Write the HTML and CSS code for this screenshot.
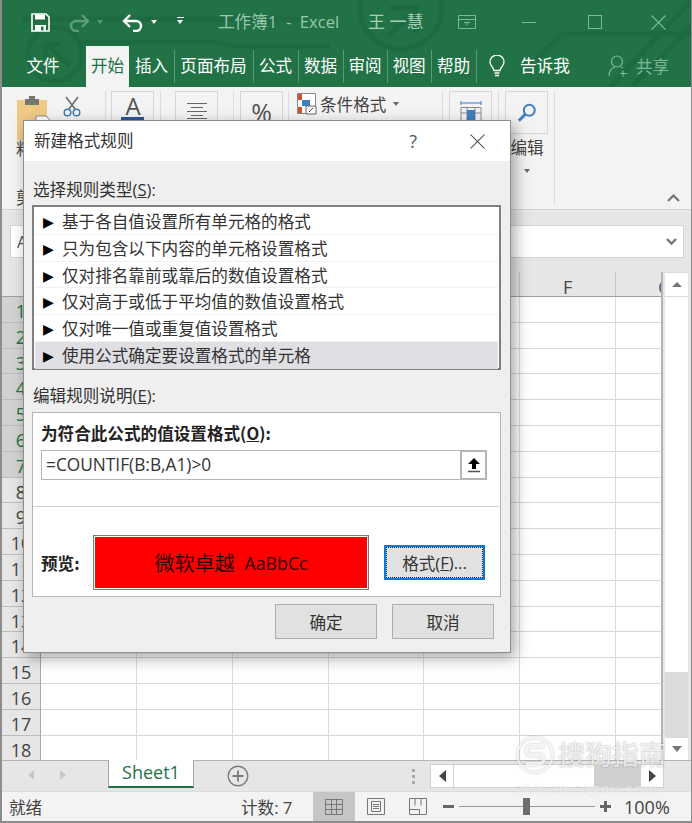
FILE: index.html
```html
<!DOCTYPE html>
<html lang="zh">
<head>
<meta charset="utf-8">
<title>新建格式规则</title>
<link rel="stylesheet" href="styles.css">
</head>
<body>
<div class="app">
  <header class="head">
    <svg class="circuit" width="692" height="87" viewBox="0 0 692 87" fill="none" stroke="#1e6b41" stroke-width="5">
      <path d="M22 19H300"/>
      <circle cx="55" cy="54" r="27"/>
      <path d="M46 44l24 22M46 44h14M46 44v14"/>
      <path d="M80 42H220l8 4H330"/>
      <circle cx="401" cy="8" r="41"/>
      <path d="M390 8h26v26M416 8l-28 28"/>
      <path d="M536 60l26-26H692M610 87L692 0M632 87L692 25"/>
    </svg>
    <div class="titlebar">
      <svg class="ic-save" width="19" height="19" viewBox="0 0 19 19"><path d="M1 1h14l3 3v14H1z" fill="none" stroke="#fff" stroke-width="1.6"/><path d="M4 1.5h10v5H4z" fill="#fff"/><path d="M4 12h11v6H4z" fill="#fff"/><path d="M10 13.500h2.500v4H10z" fill="#217346"/></svg>
      <svg class="ic-redo" width="22" height="20" viewBox="0 0 22 20" fill="none" stroke="#5c9c7a" stroke-width="2.400"><path d="M20 9H8a5 5 0 0 0 0 10h3"/><path d="M14 3l6 6-6 6"/></svg>
      <span class="drop dim"></span>
      <svg class="ic-undo" width="22" height="20" viewBox="0 0 22 20" fill="none" stroke="#fff" stroke-width="2.400"><path d="M2 9h12a5 5 0 0 1 0 10h-3"/><path d="M8 3L2 9l6 6"/></svg>
      <span class="drop"></span>
      <span class="custom"></span>
      <span class="doc">工作簿1&nbsp;&nbsp;-&nbsp;&nbsp;Excel</span>
      <span class="user">王 一慧</span>
      <svg class="ic-disp" width="18" height="14" viewBox="0 0 18 14" fill="none" stroke="#7fb79a"><path d="M.5.500h17v13H.500zM.5 4.500h17M6 7.500h6M9 7.500v3"/></svg>
      <span class="win-min"></span>
      <span class="win-max"></span>
      <svg class="win-close" width="15" height="15" viewBox="0 0 15 15" stroke="#7fb79a" stroke-width="1.100"><path d="M.5.500l14 14M14.500.500l-14 14"/></svg>
    </div>
    <nav class="tabs">
      <span class="tab t-file">文件</span>
      <span class="tab t-home">开始</span>
      <span class="tab t-ins sep">插入</span>
      <span class="tab t-page sep">页面布局</span>
      <span class="tab t-form sep">公式</span>
      <span class="tab t-data sep">数据</span>
      <span class="tab t-rev sep">审阅</span>
      <span class="tab t-view sep">视图</span>
      <span class="tab t-help sep">帮助</span>
      <svg class="ic-bulb" width="16" height="23" viewBox="0 0 16 23" fill="none" stroke="#fff" stroke-width="1.300"><path d="M5 15.500C4.500 12 1 11 1 7a7 7 0 0 1 14 0c0 4-3.500 5-4 8.500z"/><path d="M5.500 18h5M6 20.500h4" stroke-width="1.600"/></svg>
      <span class="tell">告诉我</span>
      <span class="share">
        <svg width="20" height="22" viewBox="0 0 20 22" fill="none" stroke="#7fb79a" stroke-width="1.200"><circle cx="9" cy="6.500" r="5.500"/><path d="M1 21c0-5 3-8 6-9M13 12l2 1M15 15.500v6M12 18.500h7"/></svg>
        <span>共享</span>
      </span>
    </nav>
  </header>

  <section class="ribbon">
    <div class="rb-paste">
      <svg width="38" height="44" viewBox="0 0 38 44"><path d="M1 4h30v40H1z" fill="#f0c987"/><path d="M9 3h14v6H9zM13 0h6v4h-6z" fill="#767676"/><path d="M20 20h10l6 6v18H20z" fill="#fff" stroke="#8a8a8a"/></svg>
      <svg class="scissors" width="18" height="21" viewBox="0 0 18 21" fill="none"><path d="M3 1l9 12M15 1L6 13" stroke="#6d6d6d" stroke-width="1.600"/><circle cx="4.500" cy="16.500" r="3.300" stroke="#3d7ab5" stroke-width="1.500"/><circle cx="13.500" cy="16.500" r="3.300" stroke="#3d7ab5" stroke-width="1.500"/></svg>
    </div>
    <span class="rb-lbl paste-lbl">粘贴</span>
    <span class="rb-lbl clip-lbl">剪贴板</span>
    <i class="rb-sep s1"></i>
    <div class="rb-btn b1"><svg width="24" height="24" viewBox="0 0 24 24"><text class="ic-a" x="12" y="19" text-anchor="middle">A</text><rect x="0" y="21" width="23" height="3" fill="#2b579a"/></svg></div>
    <i class="rb-sep s2"></i>
    <div class="rb-btn b2"><svg width="20" height="16" viewBox="0 0 20 16" stroke="#666"><path d="M0 .500h20M4 4.500h12M0 8.500h20M4 12.500h12M0 15.500h20"/></svg></div>
    <i class="rb-sep s3"></i>
    <div class="rb-btn b3"><span class="pct">%</span></div>
    <i class="rb-sep s4"></i>
    <div class="cond">
      <svg width="20" height="22" viewBox="0 0 20 22"><path d="M.5.500h18v20H.500z" fill="#fff" stroke="#888"/><path d="M1 1h4v6H1zM1 14h4v6H1z" fill="#d2502d"/><path d="M5 7h8v6H5z" fill="#3f7fc0"/><path d="M9 13h10v8H9z" fill="#fff" stroke="#666"/><path d="M12 19l4-4" stroke="#444"/></svg>
      <span>条件格式</span><span class="drop grey"></span>
    </div>
    <i class="rb-sep s5"></i>
    <div class="rb-btn b5"><svg width="22" height="28" viewBox="0 0 22 28" fill="none"><path d="M1 3h20M1 1v4M21 1v4" stroke="#3f7fc0"/><path d="M1 7.500h20v19H1zM1 13h20M7 7.500v19M15 7.500v19" stroke="#888"/><path d="M7 10h8v10H7z" fill="#3f7fc0"/></svg></div>
    <i class="rb-sep s6"></i>
    <div class="rb-btn b6"><svg width="20" height="20" viewBox="0 0 22 22" fill="none" stroke="#3f7fc0"><circle cx="13.500" cy="8" r="6" stroke-width="2.200"/><path d="M9 12.500l-7 7" stroke-width="3.200"/></svg></div>
    <div class="edit-lbl">编辑<span class="drop grey"></span></div>
    <i class="rb-sep s7"></i>
    <svg class="collapse" width="13" height="8" viewBox="0 0 13 8" fill="none" stroke="#777" stroke-width="2.200"><path d="M1 7l5.500-5.500L12 7"/></svg>
  </section>

  <section class="fbar">
    <div class="fbox"><span>A</span><svg width="11" height="8" viewBox="0 0 11 8" fill="none" stroke="#777" stroke-width="2.400"><path d="M1 1l4.500 4.500L10 1"/></svg></div>
  </section>

  <section class="sheet">
    <div class="heads">
      <div class="corner"></div>
      <div class="rows">
        <b class="on">1</b><b class="on">2</b><b class="on">3</b><b class="on">4</b><b class="on">5</b><b class="on">6</b><b class="on">7</b><b>8</b><b>9</b><b>10</b><b>11</b><b>12</b><b>13</b><b>14</b><b>15</b><b>16</b><b>17</b><b>18</b>
      </div>
    </div>
    <div class="data">
      <div class="cols">
        <span></span><span></span><span></span><span></span><span></span><span>F</span><span class="cut">G</span>
      </div>
      <div class="cells"></div>
    </div>
    <div class="vscroll">
      <span class="arrow"><i class="tri up"></i></span>
      <span class="thumb"></span>
      <span class="track"></span>
      <span class="arrow"><i class="tri down"></i></span>
    </div>
  </section>

  <section class="strip">
    <i class="nav-l"></i><i class="nav-r"></i>
    <span class="sheet-tab">Sheet1</span>
    <svg class="add" width="22" height="22" viewBox="0 0 22 22" fill="none" stroke="#7a7a7a"><circle cx="11" cy="11" r="9.800" stroke-width="1.400"/><path d="M11 5.500v11M5.500 11h11" stroke-width="1.800"/></svg>
    <span class="dots"></span>
    <div class="hscroll">
      <span class="harrow"><i class="tri left"></i></span>
      <span class="hthumb"></span>
      <span class="htrack"></span>
      <span class="harrow"><i class="tri right"></i></span>
    </div>
  </section>

  <footer class="status">
    <span class="ready">就绪</span>
    <span class="count">计数: 7</span>
    <span class="view on"><svg width="18" height="16" viewBox="0 0 18 16" fill="none" stroke="#777"><path d="M.5.500h17v15H.500zM.5 5.500h17M.5 10.500h17M6.500.500v15M11.500.500v15"/></svg></span>
    <span class="view"><svg width="18" height="17" viewBox="0 0 18 17" fill="none" stroke="#777"><path d="M.5.500h17v16H.500z"/><path d="M4.500 3.500h9v10h-9zM6 6.500h6M6 8.500h6M6 10.500h6"/></svg></span>
    <span class="view"><svg width="18" height="17" viewBox="0 0 18 17" fill="none" stroke="#777"><path d="M.5.500h17v16H.500zM.5 11.500h10v5M6 .500v7M12 .500v7"/></svg></span>
    <span class="zoom">
      <i class="z-minus"></i>
      <span class="slider"><i class="knob"></i></span>
      <i class="z-plus"></i>
    </span>
    <span class="pctz">100%</span>
  </footer>

  <div class="wm">
    <svg width="38" height="38" viewBox="0 0 38 38" fill="none" stroke="#fff" stroke-opacity=".75"><circle cx="19" cy="19" r="17.500" stroke-width="2"/><path d="M28 10H15a4.500 4.500 0 0 0 0 9h8a4.500 4.500 0 0 1 0 9H10" stroke-width="4"/></svg>
    <span class="wm-t">搜狗指南</span>
    <span class="wm-u">zhinan.sogou.com</span>
  </div>

  <div class="dialog">
    <div class="dlg-title">
      <span class="dlg-name">新建格式规则</span>
      <span class="help">?</span>
      <svg width="15" height="15" viewBox="0 0 15 15" stroke="#333" stroke-width="1.050"><path d="M.5.500l14 14M14.500.500l-14 14"/></svg>
    </div>
    <div class="dlg-body">
      <label class="lbl">选择规则类型(<u>S</u>):</label>
      <ul class="rules">
        <li><i>▶</i>基于各自值设置所有单元格的格式</li>
        <li><i>▶</i>只为包含以下内容的单元格设置格式</li>
        <li><i>▶</i>仅对排名靠前或靠后的数值设置格式</li>
        <li><i>▶</i>仅对高于或低于平均值的数值设置格式</li>
        <li><i>▶</i>仅对唯一值或重复值设置格式</li>
        <li class="sel"><i>▶</i>使用公式确定要设置格式的单元格</li>
      </ul>
      <label class="lbl lbl2">编辑规则说明(<u>E</u>):</label>
      <div class="group">
        <div class="g-top">
          <div class="g-head">为符合此公式的值设置格式(<u>O</u>):</div>
          <div class="formula">
            <span class="f-text">=COUNTIF(B:B,A1)&gt;0</span>
            <span class="f-btn"><svg width="12" height="15" viewBox="0 0 12 15"><path d="M6 0l6 6H8v5H4V6H0z" fill="#000"/><path d="M0 13.500h12" stroke="#555" stroke-width="1.500"/></svg></span>
          </div>
        </div>
        <div class="g-bot">
          <span class="pv-lbl">预览:</span>
          <div class="pv"><div class="pv-in"><span class="pv-c">微软卓越</span><span class="pv-l">AaBbCc</span></div></div>
          <button class="btn fmt"><span>格式(<u>F</u>)...</span></button>
        </div>
      </div>
      <div class="actions">
        <button class="btn act">确定</button>
        <button class="btn act">取消</button>
      </div>
    </div>
  </div>
</div>
</body>
</html>
```
FILE: styles.css
```css
* { box-sizing: border-box; }
html, body { margin: 0; padding: 0; }
body { background: #fff; font-family: "Open Sans", "Noto Sans CJK SC", sans-serif; color: #333; }
.app { position: relative; width: 692px; height: 823px; overflow: hidden; display: flex; flex-direction: column; background: #f3f3f3; border-left: 2px solid #8d8d8d; border-right: 1px solid #8d8d8d; border-bottom: 2px solid #8d8d8d; }

.head { position: relative; height: 87px; margin-left: -2px; margin-right: -1px; background: #217346; flex: none; }
.circuit { position: absolute; left: 0; top: 0; }
.titlebar { position: relative; height: 44px; display: flex; align-items: center; padding-left: 31px; }
.ic-save { flex: none; }
.ic-redo { margin-left: 18px; }
.drop { width: 0; height: 0; border: 3.5px solid transparent; border-top: 4px solid #fff; border-bottom: 0; display: inline-block; }
.drop.dim { border-top-color: #5c9c7a; margin-left: 7px; }
.drop.grey { border-top-color: #666; }
.ic-undo { margin-left: 19px; }
.ic-undo + .drop { margin-left: 7px; }
.custom { width: 7px; height: 6px; margin-left: 20px; margin-bottom: 4px; border-top: 1px solid #fff; position: relative; }
.custom::after { content: ""; position: absolute; left: 0; top: 2px; border: 3.5px solid transparent; border-top: 4px solid #fff; border-bottom: 0; }
.doc { margin-left: 34px; font-size: 16.600px; color: #9cc7b0; white-space: nowrap; width: 150px; line-height: 42px; }
.user { font-size: 17px; color: #a9cfba; width: 54px; white-space: nowrap; line-height: 42px; }
.ic-disp { margin-left: 36px; }
.win-min { width: 14px; height: 1px; background: #7fb79a; margin-left: 46px; }
.win-max { width: 14px; height: 14px; border: 1px solid #7fb79a; margin-left: 52px; }
.win-close { margin-left: 49px; }

.tabs { position: relative; height: 43px; font-size: 16.600px; color: #fff; }
.tab { position: absolute; top: 2px; height: 41px; line-height: 40px; text-align: center; white-space: nowrap; }
.tab.sep::after { content: ""; position: absolute; top: 4px; right: -1px; width: 1px; height: 33px; background: #5a9a78; }
.t-file { left: 21px; width: 44px; }
.t-home { left: 86px; width: 43px; background: #f3f3f3; color: #217346; }
.t-ins { left: 129px; width: 45px; }
.t-page { left: 174px; width: 79px; }
.t-form { left: 253px; width: 45px; }
.t-data { left: 298px; width: 45px; }
.t-rev { left: 343px; width: 44px; }
.t-view { left: 387px; width: 44px; }
.t-help { left: 431px; width: 45px; }
.ic-bulb { position: absolute; left: 489px; top: 11px; }
.tell { position: absolute; left: 520px; top: 2px; line-height: 40px; }
.share { position: absolute; left: 608px; top: 2px; height: 40px; display: flex; align-items: center; gap: 8px; color: #7fb79a; }

.ribbon { position: relative; height: 123px; flex: none; background: #f3f3f3; border-bottom: 1px solid #d2d2d2; margin-left: -2px; }
.rb-paste { position: absolute; left: 16px; top: 9px; }
.scissors { position: absolute; left: 47px; top: 0; }
.rb-lbl { position: absolute; left: 16px; font-size: 16.600px; color: #444; white-space: nowrap; line-height: 22px; }
.paste-lbl { top: 51px; }
.clip-lbl { top: 100px; }
.rb-sep { position: absolute; top: 4px; width: 1px; height: 114px; background: #dcdcdc; }
.s1 { left: 105px; } .s2 { left: 160px; } .s3 { left: 233px; } .s4 { left: 288px; } .s5 { left: 442px; } .s6 { left: 498px; } .s7 { left: 554px; }
.rb-btn { position: absolute; top: 4px; width: 43px; height: 43px; border: 1px solid #d6d6d6; display: flex; align-items: flex-start; justify-content: center; }
.b1 { left: 111px; padding-top: 4px; } .b2 { left: 175px; padding-top: 11px; } .b3 { left: 240px; padding-top: 2px; } .b5 { left: 449px; padding-top: 8px; } .b6 { left: 505px; padding-top: 11px; }
.ic-a { font: 24px "Open Sans", sans-serif; fill: #555; }
.pct { font-size: 25px; color: #555; line-height: 36px; }
.cond { position: absolute; left: 297px; top: 5px; display: flex; align-items: center; gap: 3px; font-size: 16.600px; color: #444; }
.cond .drop { margin-left: 4px; }
.edit-lbl { position: absolute; left: 509px; top: 46px; width: 36px; font-size: 16.600px; line-height: 30px; color: #444; display: flex; flex-direction: column; align-items: center; }
.edit-lbl .drop { margin-top: 6px; }
.collapse { position: absolute; right: 11px; top: 107px; }

.fbar { height: 62px; flex: none; background: #e6e6e6; padding: 15px 7px 0 8px; }
.fbox { height: 33px; background: #fff; border: 1px solid #d4d4d4; display: flex; align-items: center; justify-content: space-between; padding: 0 6px; font-size: 16px; color: #555; }

.sheet { height: 488px; flex: none; display: flex; overflow: hidden; background: #e6e6e6; }
.heads { width: 39px; flex: none; }
.corner { height: 25px; border-bottom: 1px solid #9e9e9e; }
.rows { border-right: 1px solid #a8a8a8; }
.rows b { display: block; height: 25.800px; line-height: 29px; overflow: hidden; font-weight: 400; font-size: 18px; color: #444; text-align: center; border-bottom: 1px solid #bdbdbd; }
.rows b.on { background: #d2d2d2; color: #217346; }
.data { width: 622px; flex: none; border-right: 2px solid #b4b4b4; }
.cols { height: 25px; display: flex; border-bottom: 1px solid #9e9e9e; font-size: 18px; color: #444; line-height: 30px; overflow: hidden; }
.cols span { width: 95.850px; flex: none; text-align: center; border-right: 1px solid #c6c6c6; }
.cols .cut { width: 46px; border: 0; overflow: hidden; text-align: left; padding-left: 42px; color: #335f8f; }
.cells { height: 470px; background-color: #fff;
  background-image: repeating-linear-gradient(to right, transparent 0, transparent 94.850px, #dcdcdc 94.850px, #dcdcdc 95.850px),
                    repeating-linear-gradient(to bottom, transparent 0, transparent 24.800px, #d6d6d6 24.800px, #d6d6d6 25.800px); }
.vscroll { width: 23px; margin-left: 2px; flex: none; display: flex; flex-direction: column; gap: 1px; padding-top: 1px; background: #dbdbdb; }
.arrow { height: 23px; flex: none; background: #fff; display: flex; align-items: center; justify-content: center; }
.thumb { height: 375px; flex: none; background: #fff; }
.track { flex: 1; }
.arrow:last-child { height: 22px; }
.tri { width: 0; height: 0; display: block; border: 5px solid transparent; }
.tri.up { border-top: 0; border-bottom: 5px solid #777; }
.tri.down { border-bottom: 0; border-top: 6px solid #777; }
.tri.left { border: 6px solid transparent; border-left: 0; border-right: 7px solid #444; }
.tri.right { border: 6px solid transparent; border-right: 0; border-left: 7px solid #444; }

.strip { position: relative; height: 31px; flex: none; background: #e6e6e6; border-top: 1px solid #b4b4b4; }
.nav-l, .nav-r { position: absolute; top: 9px; width: 0; height: 0; border: 5.500px solid transparent; }
.nav-l { left: 26px; border-left: 0; border-right: 6px solid #c8c8c8; }
.nav-r { left: 58px; border-right: 0; border-left: 6px solid #c8c8c8; }
.sheet-tab { position: absolute; left: 106px; top: -1px; width: 86px; height: 28px; background: #fff; border: 1px solid #a8a8a8; border-top: 0; border-bottom: 2px solid #217346; color: #217346; font-size: 18px; line-height: 25px; text-align: center; }
.add { position: absolute; left: 225px; top: 4px; }
.dots { position: absolute; left: 410px; top: 8px; width: 3px; height: 15px; background: repeating-linear-gradient(to bottom, #aaa 0, #aaa 3px, transparent 3px, transparent 6px); }
.hscroll { position: absolute; left: 428px; top: 3px; width: 234px; height: 24px; display: flex; gap: 1px; background: #d0d0d0; padding: 1px; }
.harrow { width: 22px; height: 22px; flex: none; background: #fff; display: flex; align-items: center; justify-content: center; }
.hthumb { width: 140px; flex: none; background: #fff; }
.htrack { flex: 1; }

.status { position: relative; height: 30px; flex: none; background: #f3f3f3; border-top: 1px solid #dcdcdc; display: flex; align-items: center; font-size: 16.600px; color: #444; }
.ready { margin-left: 7px; width: 232px; flex: none; }
.count { width: 72px; flex: none; }
.view { width: 42px; height: 29px; flex: none; display: flex; align-items: center; justify-content: center; }
.view.on { background: #c6c6c6; }
.zoom { margin-left: 4px; width: 181px; flex: none; display: flex; align-items: center; }
.z-minus { width: 11px; height: 3px; background: #666; flex: none; }
.slider { position: relative; width: 136px; height: 1px; margin-left: 5px; background: #999; flex: none; }
.knob { position: absolute; left: 64px; top: -8px; width: 7px; height: 17px; background: #6d6d6d; }
.z-plus { position: relative; width: 11px; height: 3px; margin-left: 5px; background: #666; flex: none; }
.z-plus::after { content: ""; position: absolute; left: 4px; top: -4px; width: 3px; height: 11px; background: #666; }
.pctz { font-size: 18px; white-space: nowrap; }

.wm { position: absolute; left: 514px; top: 735px; width: 172px; height: 66px; color: rgba(255,255,255,.7); pointer-events: none; }
.wm svg { position: absolute; left: 0; top: 1px; filter: drop-shadow(0 0 1px rgba(0,0,0,.3)); }
.wm-t { position: absolute; left: 42px; top: 0; font-size: 27px; line-height: 40px; white-space: nowrap; color: rgba(255,255,255,.75); text-shadow: 0 0 2px rgba(0,0,0,.35); }
.wm-u { position: absolute; left: 0; top: 44px; font-size: 14.500px; line-height: 20px; letter-spacing: 1.200px; white-space: nowrap; text-shadow: 0 0 1px rgba(0,0,0,.15); }

.dialog { position: absolute; left: 21px; top: 120px; width: 488px; height: 533px; background: #efefef; border: 1px solid #8e8e8e; box-shadow: 4px 5px 14px rgba(0,0,0,.35); display: flex; flex-direction: column; }
.dlg-title { height: 40px; flex: none; background: #fff; display: flex; align-items: center; padding-left: 10px; font-size: 16.600px; color: #333; line-height: 38px; }
.dlg-name { flex: 1; }
.help { font-size: 18px; color: #555; margin-right: 53px; }
.dlg-title svg { margin-right: 25px; }
.dlg-body { flex: 1; padding: 18px 8px 0 8px; display: flex; flex-direction: column; }
.lbl { display: block; height: 26px; line-height: 22px; font-size: 16.600px; color: #333; padding-left: 1px; }
.rules { list-style: none; margin: 0; padding: 1px 1px 2px 1px; width: 469px; height: 165px; background: #fff; border: 2px solid #7f7f7f; }
.rules li { height: 26.800px; padding-left: 8px; font-size: 16.600px; line-height: 28px; color: #333; border-bottom: 1px solid #f1f1f1; white-space: nowrap; display: flex; }
.rules i { font-style: normal; font-family: "DejaVu Sans", sans-serif; font-size: 14px; color: #000; width: 19px; flex: none; }
.rules li.sel { background: #e0e0e4; border-bottom: 0; }
.lbl2 { margin-top: 15px; height: 27px; }
.group { height: 185px; width: 469px; background: #fff; border: 1px solid #b5b5b5; display: flex; flex-direction: column; }
.g-top { height: 94px; flex: none; padding: 8px 0 0 8px; border-bottom: 1px solid #cfcfcf; margin-right: 1px; }
.g-head { font-family: "Noto Sans CJK SC", sans-serif; font-size: 16.600px; font-weight: 700; color: #222; line-height: 24px; margin-bottom: 5px; }
.formula { width: 446px; height: 30px; display: flex; border: 1px solid #b5b5b5; border-width: 1px 0 1px 1px; }
.f-text { flex: 1; font-size: 17.300px; line-height: 27px; padding-left: 4px; color: #333; }
.f-btn { width: 27px; height: 30px; margin-top: -1px; border: 2px solid #b5b5b5; background: #fff; display: flex; align-items: center; justify-content: center; flex: none; }
.g-bot { flex: 1; display: flex; align-items: flex-start; padding: 28px 0 0 8px; }
.pv-lbl { font-family: "Noto Sans CJK SC", sans-serif; font-size: 16.600px; font-weight: 700; color: #222; width: 52px; flex: none; line-height: 56px; }
.pv { width: 276px; height: 55px; flex: none; background: #fff; border: 1px solid #7a7a7a; padding: 1px; }
.pv-in { height: 100%; background: #f00; display: flex; align-items: center; justify-content: center; color: #2a0000; gap: 10px; }
.pv-c { font-size: 20px; }
.pv-l { font-size: 17.800px; }
.btn { background: #e1e1e1; border: 1px solid #adadad; font-family: inherit; font-size: 16.600px; color: #333; padding: 0; }
.fmt { margin: 10px 0 0 15px; width: 101px; height: 35px; border: 1px solid #0a78d7; outline: 1px solid #0a78d7; outline-offset: -2px; display: flex; align-items: center; justify-content: center; }
.fmt span { display: flex; align-items: center; justify-content: center; width: 95px; height: 29px; outline: 1px dotted #222; }
.actions { display: flex; justify-content: flex-end; gap: 15px; padding: 7px 9px 0 0; width: 471px; }
.act { width: 102px; height: 35px; }
```
